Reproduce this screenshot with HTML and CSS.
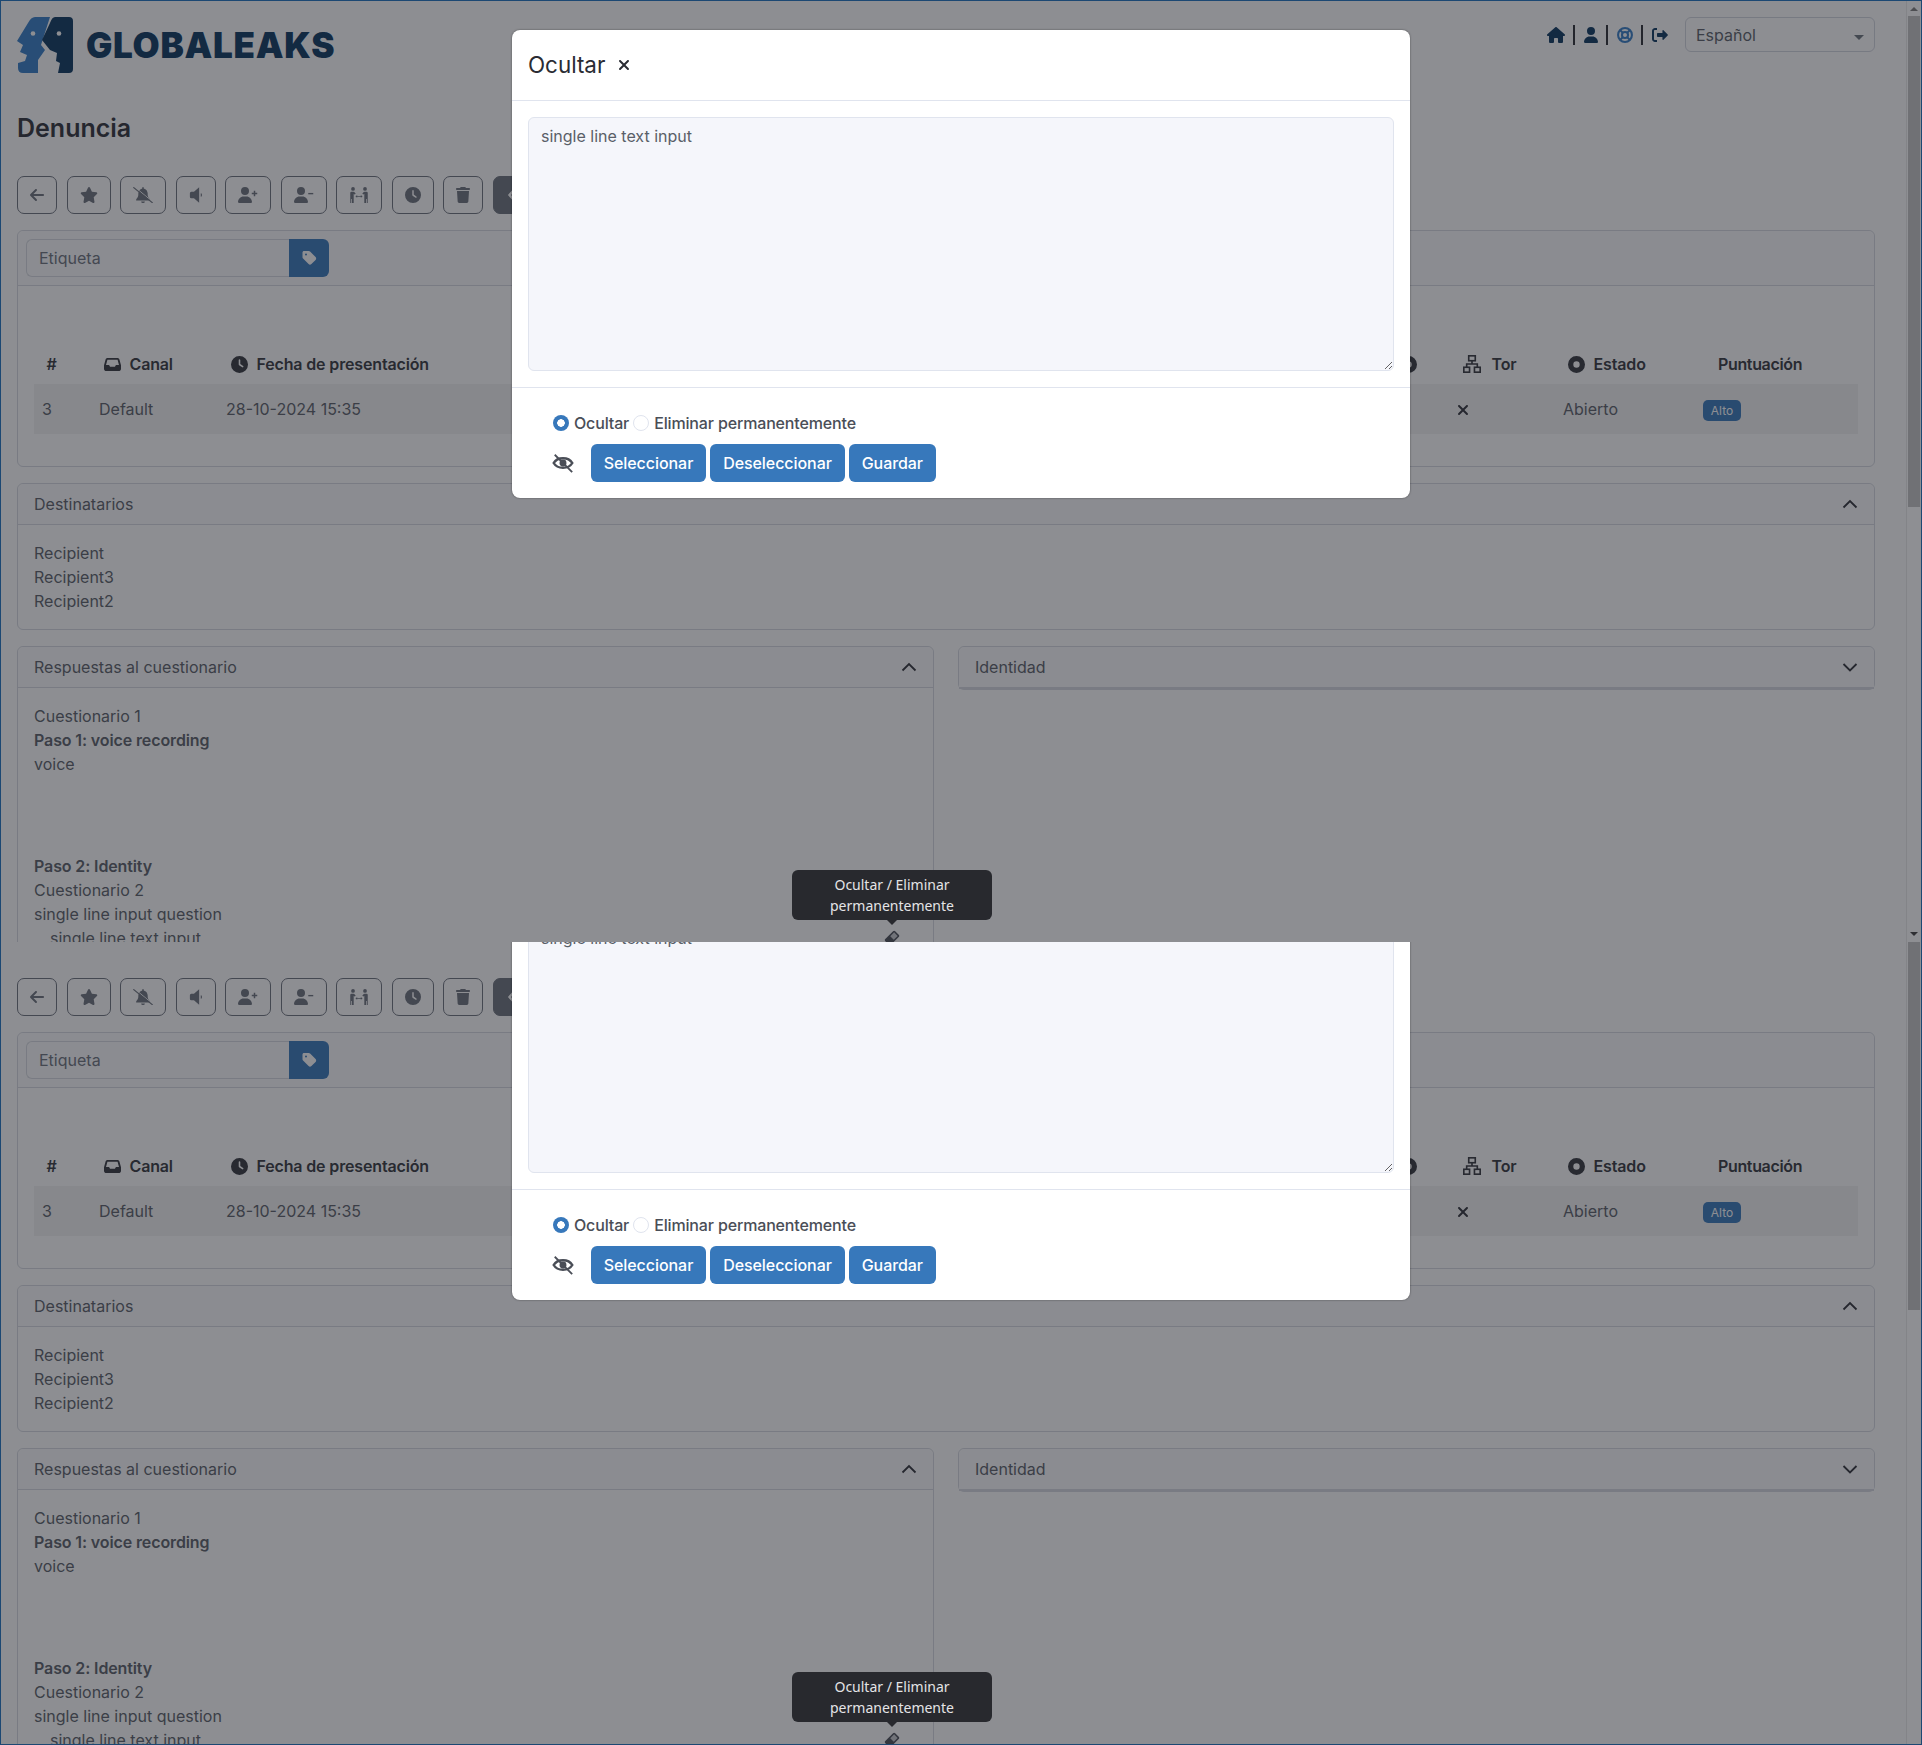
FILE: index.html
```html
<!DOCTYPE html>
<html lang="es">
<head>
    <meta charset="UTF-8">
    <title>Denuncia</title>
    <link rel="stylesheet" href="styles.css">
</head>
<body>
    <svg class="icon-defs" aria-hidden="true">
        <symbol id="i-logo" viewBox="0 0 56 56">
            <path class="logo-blue" d="M18 0H33L24 28L28 33L21 43V56H6Q1 56 1 51V46L8 44L10 38L3 35L6 28L0 24L11 6Q14 0 18 0Z"/>
            <path class="logo-dark" d="M38 0H52Q56 0 56 4V52Q56 56 52 56H41L43 46L39 44L40 36L33 33L25 23L33 6Q35 0 38 0Z"/>
            <circle class="logo-eye" cx="16" cy="16.500" r="2.300"/>
            <circle class="logo-eye" cx="42" cy="16.500" r="2.300"/>
        </symbol>
        <symbol id="i-home" viewBox="0 0 576 512"><path d="M575.800 255.500c0 18-15 32.100-32 32.100h-32l.7 160.200c0 2.700-.2 5.400-.5 8.100V472c0 22.100-17.900 40-40 40H456c-1.100 0-2.200 0-3.300-.1c-1.400 .1-2.800 .1-4.200 .1H392c-22.100 0-40-17.900-40-40V384c0-17.700-14.300-32-32-32H256c-17.700 0-32 14.300-32 32v88c0 22.100-17.900 40-40 40H128.100c-1.500 0-3-.1-4.500-.2c-1.200 .1-2.400 .2-3.600 .2H104c-22.100 0-40-17.900-40-40V360c0-.9 0-1.900 .1-2.800V287.600H32c-18 0-32-14-32-32.100c0-9 3-17 10-24L266.400 8c7-7 15-8 22-8s15 2 21 7L564.800 231.500c8 7 12 15 11 24z"/></symbol>
        <symbol id="i-user" viewBox="0 0 448 512"><path d="M224 256A128 128 0 1 0 224 0a128 128 0 1 0 0 256zm-45.700 48C79.800 304 0 383.800 0 482.300C0 498.700 13.300 512 29.700 512H418.300c16.400 0 29.700-13.300 29.700-29.700C448 383.800 368.200 304 269.700 304H178.300z"/></symbol>
        <symbol id="i-ring" viewBox="0 0 512 512"><g class="stroked" stroke-width="66"><circle cx="256" cy="256" r="222"/><circle cx="256" cy="256" r="96"/><path d="M96 96L188 188M416 96L324 188M96 416L188 324M416 416L324 324"/></g></symbol>
        <symbol id="i-out" viewBox="0 0 512 512"><path d="M160 96H96c-18 0-32 14-32 32V384c0 18 14 32 32 32h64v64H96c-53 0-96-43-96-96V128C0 75 43 32 96 32h64zM502 273L367 408c-12 12-33 3-33-14V320H192c-18 0-32-14-32-32V224c0-18 14-32 32-32H334V118c0-17 21-26 33-14L502 239c9 9 9 25 0 34z"/></symbol>
        <symbol id="i-back" viewBox="0 0 448 512"><path d="M9.400 233.400c-12.500 12.500-12.500 32.800 0 45.300l160 160c12.500 12.500 32.800 12.500 45.300 0s12.500-32.800 0-45.300L109.200 288 416 288c17.700 0 32-14.300 32-32s-14.300-32-32-32l-306.700 0L214.600 118.600c12.500-12.500 12.500-32.800 0-45.300s-32.800-12.500-45.300 0l-160 160z"/></symbol>
        <symbol id="i-star" viewBox="0 0 576 512"><path d="M316.900 18C311.600 7 300.400 0 288.100 0s-23.400 7-28.800 18L195 150.300 51.400 171.500c-12 1.800-22 10.200-25.700 21.700s-.7 24.200 7.900 32.700L137.800 329 113.200 474.700c-2 12 3 24.200 12.900 31.300s23 8 33.800 2.300l128.300-68.500 128.300 68.500c10.800 5.700 23.900 4.900 33.800-2.300s14.900-19.300 12.900-31.300L438.500 329 542.700 225.900c8.600-8.500 11.700-21.200 7.900-32.700s-13.700-19.900-25.700-21.700L381.200 150.300 316.900 18z"/></symbol>
        <symbol id="i-bell-off" viewBox="0 0 640 512"><path d="M320 0q-24 0-24 24V44C220 60 170 130 170 210v30c0 50-20 100-50 130q-20 20-20 40v22H540V410q0-20-20-40c-30-30-50-80-50-130V210c0-80-50-150-126-166V24q0-24-24-24zM260 460a60 52 0 0 0 120 0z"/><path class="bell-gap" d="M30 -20L640 480"/><path class="stroked" stroke-width="38" d="M10 10L630 510"/></symbol>
        <symbol id="i-volume" viewBox="20 40 370 432"><path d="M80 170H150L290 50V462L150 342H80Q40 342 40 300V212Q40 170 80 170z"/><path class="stroked" stroke-width="30" d="M340 215Q365 256 340 297"/></symbol>
        <symbol id="i-user-plus" viewBox="0 0 640 512"><path d="M224 256A128 128 0 1 0 224 0a128 128 0 1 0 0 256zm-45.700 48C79.800 304 0 383.800 0 482.300C0 498.700 13.300 512 29.700 512H418.300c16.400 0 29.700-13.300 29.700-29.700C448 383.800 368.200 304 269.700 304H178.300z"/><path d="M504 120v64H440v48h64v64h48V232h64V184H552V120z"/></symbol>
        <symbol id="i-user-minus" viewBox="0 0 640 512"><path d="M224 256A128 128 0 1 0 224 0a128 128 0 1 0 0 256zm-45.700 48C79.800 304 0 383.800 0 482.300C0 498.700 13.300 512 29.700 512H418.300c16.400 0 29.700-13.300 29.700-29.700C448 383.800 368.200 304 269.700 304H178.300z"/><rect x="456" y="190" width="160" height="44"/></symbol>
        <symbol id="i-people" viewBox="0 0 640 512"><circle cx="128" cy="60" r="60"/><circle cx="512" cy="60" r="60"/><path d="M40 190Q40 150 80 150H140Q170 150 190 180L215 215L170 240L150 215V512H96V380H72V512H40zM600 190Q600 150 560 150H500Q470 150 450 180L425 215L470 240L490 215V512H544V380H568V512H600z"/><path d="M205 300L262 258V285H378V258L435 300 378 342V315H262V342z"/></symbol>
        <symbol id="i-clock" viewBox="0 0 512 512"><path d="M256 0a256 256 0 1 1 0 512A256 256 0 1 1 256 0zM232 120V256c0 8 4 15.500 10.700 20l96 64c11 7.400 25.900 4.400 33.300-6.700s4.400-25.900-6.700-33.300L280 243.200V120c0-13.300-10.700-24-24-24s-24 10.700-24 24z"/></symbol>
        <symbol id="i-trash" viewBox="0 0 448 512"><path d="M135.200 17.700L128 32H32C14.300 32 0 46.300 0 64S14.300 96 32 96H416c17.700 0 32-14.300 32-32s-14.300-32-32-32H320l-7.200-14.300C307.400 6.800 296.300 0 284.200 0H163.800c-12.100 0-23.200 6.800-28.600 17.700zM416 128H32L53.200 467c1.600 25.300 22.600 45 47.900 45H346.900c25.300 0 46.300-19.700 47.900-45L416 128z"/></symbol>
        <symbol id="i-code" viewBox="0 0 16 16"><path class="stroked" stroke-width="2.400" d="M6 3L1.500 8L6 13"/></symbol>
        <symbol id="i-tag" viewBox="0 0 448 512"><path d="M0 80V229.500c0 17 6.700 33.300 18.700 45.300l176 176c25 25 65.500 25 90.500 0L418.700 317.300c25-25 25-65.500 0-90.500l-176-176c-12-12-28.300-18.700-45.300-18.700H48C21.500 32 0 53.500 0 80zm112 32a32 32 0 1 1 0 64 32 32 0 1 1 0-64z"/></symbol>
        <symbol id="i-inbox" viewBox="0 0 576 512"><path fill-rule="evenodd" d="M120 32H456c30 0 54 20 64 48l56 200V400c0 44-36 80-80 80H80c-44 0-80-36-80-80V280L56 80c10-28 34-48 64-48zM116 96L68 272H172l32 64H372l32-64H508L460 96z"/></symbol>
        <symbol id="i-secure" viewBox="0 0 512 512"><path d="M256 512A256 256 0 1 0 256 0a256 256 0 1 0 0 512zm0-352a96 96 0 1 1 0 192 96 96 0 1 1 0-192z"/></symbol>
        <symbol id="i-network" viewBox="1 1 22 22"><g class="stroked" stroke-width="2"><rect x="8" y="2" width="8" height="6"/><rect x="2" y="16" width="7" height="6"/><rect x="15" y="16" width="7" height="6"/><path d="M12 8V12M5.500 16V12H18.500V16"/></g></symbol>
        <symbol id="i-dot" viewBox="0 0 512 512"><path d="M256 512A256 256 0 1 0 256 0a256 256 0 1 0 0 512zm0-352a96 96 0 1 1 0 192 96 96 0 1 1 0-192z"/></symbol>
        <symbol id="i-close" viewBox="0 0 384 512"><path d="M342.600 150.600c12.500-12.500 12.500-32.800 0-45.300s-32.800-12.500-45.300 0L192 210.700 86.600 105.400c-12.500-12.500-32.800-12.500-45.300 0s-12.500 32.800 0 45.300L146.700 256 41.400 361.400c-12.500 12.500-12.500 32.800 0 45.300s32.800 12.500 45.300 0L192 301.300 297.400 406.600c12.500 12.500 32.800 12.500 45.300 0s12.500-32.800 0-45.300L237.300 256 342.600 150.600z"/></symbol>
        <symbol id="i-up" viewBox="0 0 16 16"><path class="stroked" stroke-width="1.800" d="M1.500 11.500L8 5L14.500 11.500"/></symbol>
        <symbol id="i-down" viewBox="0 0 16 16"><path class="stroked" stroke-width="1.800" d="M1.500 5L8 11.500L14.500 5"/></symbol>
        <symbol id="i-eye-off" viewBox="0 0 24 24"><path class="stroked" stroke-width="2.600" d="M1.800 12C6 5 18 5 22.200 12C18 19 6 19 1.800 12z"/><circle cx="12" cy="12" r="3.800"/><path class="stroked" stroke-width="2" d="M3 3L22 22"/></symbol>
        <symbol id="i-eraser" viewBox="0 0 16 16"><rect x="1" y="4" width="14" height="8" rx="1.500" transform="rotate(-45 8 8)"/><rect class="eraser-tip" x="8" y="5.500" width="5.500" height="5" transform="rotate(-45 8 8)"/></symbol>
    </svg>

    <div class="slice slice-top">
        <div class="page">
            <header class="top-bar">
                <div class="brand">
                    <svg class="logo"><use href="#i-logo"/></svg>
                    <span class="brand-name">GLOBALEAKS</span>
                </div>
                <div class="top-actions">
                    <svg class="nav-icon nav-home"><use href="#i-home"/></svg>
                    <span class="nav-sep"></span>
                    <svg class="nav-icon nav-user"><use href="#i-user"/></svg>
                    <span class="nav-sep"></span>
                    <svg class="nav-icon nav-ring"><use href="#i-ring"/></svg>
                    <span class="nav-sep"></span>
                    <svg class="nav-icon"><use href="#i-out"/></svg>
                    <div class="lang-box">
                        <select class="lang-select"><option>Español</option></select>
                    </div>
                </div>
            </header>

            <h1 class="page-title">Denuncia</h1>

            <div class="toolbar">
                <button class="tool-btn"><svg class="tool-icon"><use href="#i-back"/></svg></button>
                <button class="tool-btn w44"><svg class="tool-icon"><use href="#i-star"/></svg></button>
                <button class="tool-btn w46"><svg class="tool-icon"><use href="#i-bell-off"/></svg></button>
                <button class="tool-btn"><svg class="tool-icon"><use href="#i-volume"/></svg></button>
                <button class="tool-btn w46"><svg class="tool-icon"><use href="#i-user-plus"/></svg></button>
                <button class="tool-btn w46"><svg class="tool-icon"><use href="#i-user-minus"/></svg></button>
                <button class="tool-btn w46"><svg class="tool-icon"><use href="#i-people"/></svg></button>
                <button class="tool-btn w42"><svg class="tool-icon"><use href="#i-clock"/></svg></button>
                <button class="tool-btn"><svg class="tool-icon"><use href="#i-trash"/></svg></button>
                <button class="tool-btn tool-dark w46"><svg class="tool-icon"><use href="#i-code"/></svg></button>
            </div>

            <section class="panel">
                <div class="tag-bar">
                    <input class="tag-input" placeholder="Etiqueta">
                    <button class="tag-btn"><svg class="tag-icon"><use href="#i-tag"/></svg></button>
                </div>
                <div class="report-wrap">
                    <table class="report">
                        <colgroup>
                            <col class="col-num"><col class="col-channel"><col class="col-date"><col class="col-secure"><col class="col-tor"><col class="col-state"><col>
                        </colgroup>
                        <thead>
                            <tr>
                                <th>#</th>
                                <th><svg class="th-icon"><use href="#i-inbox"/></svg>Canal</th>
                                <th><svg class="th-icon"><use href="#i-clock"/></svg>Fecha de presentación</th>
                                <th class="th-secure"><svg class="th-icon"><use href="#i-secure"/></svg></th>
                                <th><svg class="th-icon th-icon-wide"><use href="#i-network"/></svg>Tor</th>
                                <th><svg class="th-icon"><use href="#i-dot"/></svg>Estado</th>
                                <th class="th-score">Puntuación</th>
                            </tr>
                        </thead>
                        <tbody>
                            <tr>
                                <td>3</td>
                                <td>Default</td>
                                <td>28-10-2024 15:35</td>
                                <td></td>
                                <td><svg class="cell-close"><use href="#i-close"/></svg></td>
                                <td>Abierto</td>
                                <td><span class="badge">Alto</span></td>
                            </tr>
                        </tbody>
                    </table>
                </div>
            </section>

            <section class="panel panel-next">
                <div class="panel-head"><span>Destinatarios</span><svg class="chevron"><use href="#i-up"/></svg></div>
                <div class="panel-body">
                    <div>Recipient</div>
                    <div>Recipient3</div>
                    <div>Recipient2</div>
                </div>
            </section>

            <div class="two-cols">
                <section class="panel panel-open">
                    <div class="panel-head"><span>Respuestas al cuestionario</span><svg class="chevron"><use href="#i-up"/></svg></div>
                    <div class="panel-body">
                        <div>Cuestionario 1</div>
                        <div class="step-name">Paso 1: voice recording</div>
                        <div>voice</div>
                        <div class="audio-gap"></div>
                        <div class="step-name">Paso 2: Identity</div>
                        <div>Cuestionario 2</div>
                        <div>single line input question</div>
                        <div class="answer">
                            <span>single line text input</span>
                            <svg class="eraser"><use href="#i-eraser"/></svg>
                        </div>
                    </div>
                </section>
                <section class="panel panel-closed">
                    <div class="panel-head"><span>Identidad</span><svg class="chevron"><use href="#i-down"/></svg></div>
                </section>
            </div>

            <div class="backdrop"></div>
            <div class="tooltip">Ocultar / Eliminar permanentemente</div>

            <div class="modal">
                <div class="modal-head">
                    <span class="modal-title">Ocultar</span>
                    <svg class="modal-close"><use href="#i-close"/></svg>
                </div>
                <div class="modal-body">
                    <textarea class="redact-text" readonly>single line text input</textarea>
                </div>
                <div class="modal-foot">
                    <div class="radio-row">
                        <input class="radio" type="radio" name="mode-top" checked>
                        <label>Ocultar</label>
                        <input class="radio" type="radio" name="mode-top">
                        <label>Eliminar permanentemente</label>
                    </div>
                    <div class="action-row">
                        <svg class="eye-off"><use href="#i-eye-off"/></svg>
                        <button class="blue-btn">Seleccionar</button>
                        <button class="blue-btn">Deseleccionar</button>
                        <button class="blue-btn">Guardar</button>
                    </div>
                </div>
            </div>
        </div>
        <div class="scrollbar">
            <span class="arrow-up"></span>
            <div class="thumb thumb-top"></div>
            <span class="arrow-down"></span>
        </div>
    </div>

    <div class="slice slice-bottom">
        <div class="page">
            <header class="top-bar">
                <div class="brand">
                    <svg class="logo"><use href="#i-logo"/></svg>
                    <span class="brand-name">GLOBALEAKS</span>
                </div>
            </header>

            <h1 class="page-title">Denuncia</h1>

            <div class="toolbar">
                <button class="tool-btn"><svg class="tool-icon"><use href="#i-back"/></svg></button>
                <button class="tool-btn w44"><svg class="tool-icon"><use href="#i-star"/></svg></button>
                <button class="tool-btn w46"><svg class="tool-icon"><use href="#i-bell-off"/></svg></button>
                <button class="tool-btn"><svg class="tool-icon"><use href="#i-volume"/></svg></button>
                <button class="tool-btn w46"><svg class="tool-icon"><use href="#i-user-plus"/></svg></button>
                <button class="tool-btn w46"><svg class="tool-icon"><use href="#i-user-minus"/></svg></button>
                <button class="tool-btn w46"><svg class="tool-icon"><use href="#i-people"/></svg></button>
                <button class="tool-btn w42"><svg class="tool-icon"><use href="#i-clock"/></svg></button>
                <button class="tool-btn"><svg class="tool-icon"><use href="#i-trash"/></svg></button>
                <button class="tool-btn tool-dark w46"><svg class="tool-icon"><use href="#i-code"/></svg></button>
            </div>

            <section class="panel">
                <div class="tag-bar">
                    <input class="tag-input" placeholder="Etiqueta">
                    <button class="tag-btn"><svg class="tag-icon"><use href="#i-tag"/></svg></button>
                </div>
                <div class="report-wrap">
                    <table class="report">
                        <colgroup>
                            <col class="col-num"><col class="col-channel"><col class="col-date"><col class="col-secure"><col class="col-tor"><col class="col-state"><col>
                        </colgroup>
                        <thead>
                            <tr>
                                <th>#</th>
                                <th><svg class="th-icon"><use href="#i-inbox"/></svg>Canal</th>
                                <th><svg class="th-icon"><use href="#i-clock"/></svg>Fecha de presentación</th>
                                <th class="th-secure"><svg class="th-icon"><use href="#i-secure"/></svg></th>
                                <th><svg class="th-icon th-icon-wide"><use href="#i-network"/></svg>Tor</th>
                                <th><svg class="th-icon"><use href="#i-dot"/></svg>Estado</th>
                                <th class="th-score">Puntuación</th>
                            </tr>
                        </thead>
                        <tbody>
                            <tr>
                                <td>3</td>
                                <td>Default</td>
                                <td>28-10-2024 15:35</td>
                                <td></td>
                                <td><svg class="cell-close"><use href="#i-close"/></svg></td>
                                <td>Abierto</td>
                                <td><span class="badge">Alto</span></td>
                            </tr>
                        </tbody>
                    </table>
                </div>
            </section>

            <section class="panel panel-next">
                <div class="panel-head"><span>Destinatarios</span><svg class="chevron"><use href="#i-up"/></svg></div>
                <div class="panel-body">
                    <div>Recipient</div>
                    <div>Recipient3</div>
                    <div>Recipient2</div>
                </div>
            </section>

            <div class="two-cols">
                <section class="panel panel-open">
                    <div class="panel-head"><span>Respuestas al cuestionario</span><svg class="chevron"><use href="#i-up"/></svg></div>
                    <div class="panel-body">
                        <div>Cuestionario 1</div>
                        <div class="step-name">Paso 1: voice recording</div>
                        <div>voice</div>
                        <div class="audio-gap"></div>
                        <div class="step-name">Paso 2: Identity</div>
                        <div>Cuestionario 2</div>
                        <div>single line input question</div>
                        <div class="answer">
                            <span>single line text input</span>
                            <svg class="eraser"><use href="#i-eraser"/></svg>
                        </div>
                    </div>
                </section>
                <section class="panel panel-closed">
                    <div class="panel-head"><span>Identidad</span><svg class="chevron"><use href="#i-down"/></svg></div>
                </section>
            </div>

            <div class="backdrop"></div>
            <div class="tooltip">Ocultar / Eliminar permanentemente</div>

            <div class="modal">
                <div class="modal-head">
                    <span class="modal-title">Ocultar</span>
                    <svg class="modal-close"><use href="#i-close"/></svg>
                </div>
                <div class="modal-body">
                    <textarea class="redact-text" readonly>single line text input</textarea>
                </div>
                <div class="modal-foot">
                    <div class="radio-row">
                        <input class="radio" type="radio" name="mode-bottom" checked>
                        <label>Ocultar</label>
                        <input class="radio" type="radio" name="mode-bottom">
                        <label>Eliminar permanentemente</label>
                    </div>
                    <div class="action-row">
                        <svg class="eye-off"><use href="#i-eye-off"/></svg>
                        <button class="blue-btn">Seleccionar</button>
                        <button class="blue-btn">Deseleccionar</button>
                        <button class="blue-btn">Guardar</button>
                    </div>
                </div>
            </div>
        </div>
        <div class="scrollbar">
            <div class="thumb thumb-bottom"></div>
        </div>
    </div>
</body>
</html>
```

FILE: styles.css
```css
* {
    box-sizing: border-box;
}

html, body {
    margin: 0;
    padding: 0;
}

body {
    width: 1922px;
    height: 1745px;
    overflow: hidden;
    border: 1px solid #1c4873;
    background: #fff;
    color: #5a5f68;
    font-family: Inter, "Liberation Sans", sans-serif;
    font-size: 16px;
    line-height: 24px;
}

svg {
    fill: currentColor;
}

.icon-defs {
    position: absolute;
    width: 0;
    height: 0;
}

.stroked {
    fill: none;
    stroke: currentColor;
}

/* the reference is two captures of one page stitched together */
.slice {
    display: flex;
    overflow: hidden;
}

.slice-top {
    height: 941px;
}

.slice-bottom {
    height: 803px;
}

.slice-bottom .page {
    margin-top: -139px;
}

.page {
    position: relative;
    flex: 0 0 1905px;
    height: 944px;
    padding: 16px 31px 0 16px;
    overflow: hidden;
    background: #fff;
}

.scrollbar {
    flex: 0 0 15px;
    display: flex;
    flex-direction: column;
    align-items: center;
    justify-content: space-between;
    background: #8e8f93;
    border-left: 1px solid #838488;
}

.slice-bottom .scrollbar {
    justify-content: flex-start;
}

.thumb {
    width: 12px;
    background: #707175;
}

.thumb-top {
    height: 491px;
    margin-bottom: auto;
}

.thumb-bottom {
    height: 368px;
}

.arrow-up, .arrow-down {
    flex: 0 0 auto;
    width: 0;
    height: 0;
    margin: 6px 0;
    border-left: 4px solid transparent;
    border-right: 4px solid transparent;
}

.arrow-up {
    border-bottom: 4px solid #4d4e52;
    margin-bottom: 5px;
}

.arrow-down {
    border-top: 4px solid #2e2f33;
}

/* header */
.top-bar {
    display: flex;
    justify-content: space-between;
    align-items: flex-start;
    height: 56px;
}

.brand {
    display: flex;
    align-items: center;
    gap: 13px;
}

.logo {
    width: 56px;
    height: 56px;
}

.logo-blue {
    fill: #357dc6;
}

.logo-dark {
    fill: #0a365f;
}

.logo-eye {
    fill: #fff;
}

.brand-name {
    font-size: 35px;
    font-weight: 900;
    color: #0a365f;
    letter-spacing: 0.700px;
}

.top-actions {
    display: flex;
    align-items: center;
    gap: 8.500px;
    height: 35px;
    color: #0a365f;
}

.nav-icon {
    width: 16px;
    height: 16px;
}

.nav-home {
    width: 18px;
}

.nav-user {
    width: 14px;
}

.nav-ring {
    color: #357dc6;
}

.nav-sep {
    width: 2px;
    height: 20px;
    background: #2a2c33;
}

.lang-box {
    position: relative;
    margin-left: 9px;
}

.lang-box::after {
    content: "";
    position: absolute;
    right: 11px;
    top: 18px;
    border-left: 5px solid transparent;
    border-right: 5px solid transparent;
    border-top: 5px solid #6c757d;
}

.lang-select {
    appearance: none;
    display: block;
    width: 190px;
    height: 35px;
    padding: 0 10px;
    border: 1px solid #d2d6de;
    border-radius: 6px;
    background: #fff;
    color: #5a5f68;
    font: inherit;
}

.page-title {
    margin: 40px 0 33px;
    font-size: 25px;
    font-weight: 600;
    line-height: 30px;
    color: #2f3138;
}

/* toolbar */
.toolbar {
    display: flex;
    gap: 9.500px;
    height: 38px;
    margin-bottom: 16px;
}

.tool-btn {
    display: flex;
    align-items: center;
    justify-content: center;
    width: 40px;
    height: 38px;
    padding: 0;
    border: 1px solid #6c727c;
    border-radius: 7px;
    background: #fff;
    color: #6c727c;
}

.w42 {
    width: 42px;
}

.w44 {
    width: 44px;
}

.w46 {
    width: 46px;
}

.tool-dark {
    background: #6c727c;
    color: #fff;
}

.tool-icon {
    width: 20px;
    height: 16px;
}

.bell-gap {
    fill: none;
    stroke: #fff;
    stroke-width: 30;
}

/* panels */
.panel {
    border: 1px solid #d6d9e0;
    border-radius: 6px;
    background: #fff;
}

.panel-next {
    margin-top: 16px;
}

.panel-head {
    display: flex;
    justify-content: space-between;
    align-items: center;
    height: 41px;
    padding: 0 16px;
    border-bottom: 1px solid #d6d9e0;
    background: #fbfbfc;
    border-radius: 6px 6px 0 0;
}

.panel-body {
    padding: 16px;
}

.chevron {
    width: 16px;
    height: 16px;
    color: #2f3138;
}

.tag-bar {
    display: flex;
    height: 55px;
    padding: 8px;
    border-bottom: 1px solid #d6d9e0;
    background: #fbfbfc;
    border-radius: 6px 6px 0 0;
}

.tag-input {
    width: 263px;
    height: 38px;
    padding: 0 12px;
    border: 1px solid #d6d9e0;
    border-right: 0;
    border-radius: 6px 0 0 6px;
    background: #fbfbfc;
    font: inherit;
    color: #5a5f68;
}

.tag-input::placeholder {
    color: #6c727c;
    opacity: 1;
}

.tag-btn {
    display: flex;
    align-items: center;
    justify-content: center;
    width: 40px;
    height: 38px;
    padding: 0;
    border: 0;
    border-radius: 0 6px 6px 0;
    background: #3778bb;
    color: #fff;
}

.tag-icon {
    width: 15px;
    height: 16px;
}

.report-wrap {
    padding: 58px 16px 32px;
}

.report {
    width: 100%;
    table-layout: fixed;
    border-collapse: collapse;
}

.col-num {
    width: 57px;
}

.col-channel {
    width: 127px;
}

.col-date {
    width: 1169px;
}

.col-secure {
    width: 62px;
}

.col-tor {
    width: 106px;
}

.col-state {
    width: 140px;
}

.report th {
    height: 40px;
    padding: 0 0 0 12.500px;
    text-align: left;
    font-weight: 600;
    letter-spacing: -0.150px;
    color: #34363d;
    white-space: nowrap;
}

.report th.th-score {
    padding-left: 23px;
    letter-spacing: -0.350px;
}

.report td {
    height: 50px;
    padding: 0 0 0 8px;
    background: #f2f2f2;
    white-space: nowrap;
}

.th-icon {
    width: 17px;
    height: 17px;
    margin-right: 9px;
    vertical-align: -3px;
}

.th-icon-wide {
    width: 20px;
    height: 18px;
    margin-right: 10px;
}

.cell-close {
    width: 16px;
    height: 16px;
    margin-left: -2px;
    color: #2f3138;
    vertical-align: -3px;
}

.badge {
    display: inline-block;
    width: 38px;
    height: 21px;
    border-radius: 5px;
    background: #3778bb;
    color: #fff;
    font-size: 12px;
    line-height: 21px;
    text-align: center;
}

.two-cols {
    display: grid;
    grid-template-columns: 917px 917px;
    gap: 24px;
    align-items: start;
    margin-top: 16px;
}

.panel-open {
    height: 320px;
}

.panel-closed .panel-head {
    border-bottom: 2px solid #d6d9e0;
    height: 42px;
}

.step-name {
    font-weight: 600;
    letter-spacing: -0.120px;
}

.audio-gap {
    height: 78px;
}

.answer {
    display: flex;
    justify-content: space-between;
    align-items: center;
    padding-left: 16px;
}

.eraser {
    width: 16px;
    height: 16px;
    margin-right: 17px;
    color: #4a4e57;
}

.eraser-tip {
    fill: #c6c8cc;
}

/* everything below lies over the dimmed page */
.backdrop {
    position: absolute;
    inset: 0;
    background: rgba(28, 30, 37, 0.5);
}

.tooltip {
    position: absolute;
    left: 791px;
    top: 869px;
    width: 200px;
    height: 50px;
    padding: 4px 8px;
    border-radius: 6px;
    background: #28292e;
    color: #e4e4e6;
    font-family: "Noto Sans", sans-serif;
    font-size: 14px;
    line-height: 21px;
    text-align: center;
}

.tooltip::after {
    content: "";
    position: absolute;
    left: 95px;
    bottom: -5px;
    border-left: 5px solid transparent;
    border-right: 5px solid transparent;
    border-top: 5px solid #28292e;
}

.modal {
    position: absolute;
    left: 511px;
    top: 29px;
    width: 898px;
    height: 468px;
    border-radius: 8px;
    background: #fff;
    box-shadow: 0 0 2px rgba(0, 0, 0, 0.5);
}

.modal-head {
    display: flex;
    align-items: center;
    gap: 11px;
    height: 71px;
    padding: 0 16px;
    border-bottom: 1px solid #e0e4ee;
}

.modal-title {
    font-size: 22.400px;
    color: #2a2c33;
}

.modal-close {
    width: 16px;
    height: 16px;
    color: #2a2c33;
}

.modal-body {
    height: 287px;
    padding: 16px;
    border-bottom: 1px solid #e0e4ee;
}

.redact-text {
    display: block;
    width: 100%;
    height: 254px;
    padding: 6px 12px;
    border: 1px solid #e0e4ee;
    border-radius: 6px;
    background: #f5f6fb;
    color: #5a5f68;
    font: inherit;
    outline: none;
}

.modal-foot {
    padding: 23px 16px 16px 41px;
}

.radio-row {
    display: flex;
    align-items: center;
    gap: 5px;
    height: 24px;
    font-weight: 500;
    letter-spacing: -0.150px;
    color: #4a4e57;
}

.radio {
    appearance: none;
    width: 16px;
    height: 16px;
    margin: 0;
    border: 1px solid #e0e4ee;
    border-radius: 50%;
    background: #fff;
}

.radio:checked {
    border: 0;
    background: radial-gradient(circle, #fff 0 3.500px, #3778bb 4px);
}

.radio-row label + .radio {
    margin-left: -1px;
}

.action-row {
    display: flex;
    align-items: center;
    gap: 4.500px;
    margin-top: 9px;
}

.eye-off {
    width: 22px;
    height: 22px;
    margin-left: -1px;
    margin-right: 12.500px;
    color: #4a4e57;
}

.blue-btn {
    height: 38px;
    padding: 0 12.700px;
    border: 0;
    border-radius: 6px;
    background: #3778bb;
    color: #fff;
    font: inherit;
    font-weight: 500;
    letter-spacing: -0.060px;
}
```
